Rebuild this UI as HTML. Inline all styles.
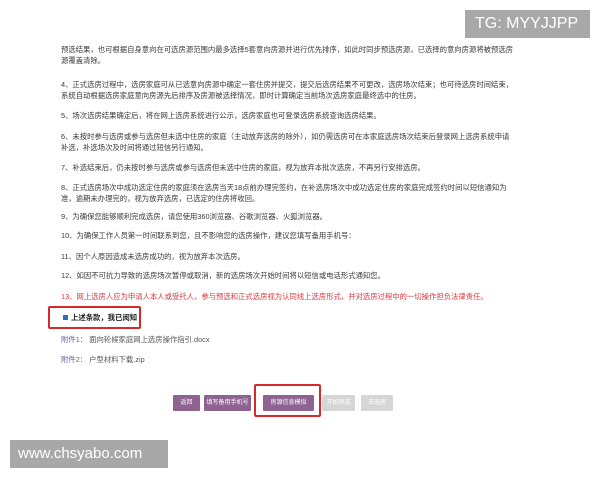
<!DOCTYPE html>
<html><head><meta charset="utf-8"><style>
*{margin:0;padding:0;box-sizing:border-box}
body{width:600px;height:480px;background:#fff;position:relative;overflow:hidden;font-family:"Liberation Sans","Noto Sans CJK SC",sans-serif;color:#3a3a3a;font-size:7px}
.t{position:absolute;left:61px;white-space:nowrap;line-height:11px;font-size:7.35px}
.red{color:#d9393e}
.btn{position:absolute;top:395px;height:16px;color:#fff;font-size:6px;text-align:center;line-height:16px;border-radius:1px}
.p{background:#8e6291}.g{background:#d6d6d6}
.wm{position:absolute;background:#a8a8a8;color:#fff;font-size:16px;line-height:28px;padding-left:10px}
</style></head><body>
<div class="t" style="top:44px">预选结果，也可根据自身意向在可选房源范围内最多选择5套意向房源并进行优先排序，如此时同步预选房源，已选择的意向房源将被预选房<br>源覆盖清除。</div>
<div class="t" style="top:79px">4、正式选房过程中，选房家庭可从已选意向房源中确定一套住房并提交，提交后选房结果不可更改，选房场次结束；也可待选房时间结束，<br>系统自动根据选房家庭意向房源先后排序及房源被选择情况，即时计算确定当前场次选房家庭最终选中的住房。</div>
<div class="t" style="top:110px">5、场次选房结果确定后，将在网上选房系统进行公示，选房家庭也可登录选房系统查询选房结果。</div>
<div class="t" style="top:131px">6、未按时参与选房或参与选房但未选中住房的家庭（主动放弃选房的除外），如仍需选房可在本家庭选房场次结束后登录网上选房系统申请<br>补选，补选场次及时间将通过短信另行通知。</div>
<div class="t" style="top:162px">7、补选结束后，仍未按时参与选房或参与选房但未选中住房的家庭，视为放弃本批次选房，不再另行安排选房。</div>
<div class="t" style="top:182px">8、正式选房场次中成功选定住房的家庭须在选房当天18点前办理完签约，在补选房场次中成功选定住房的家庭完成签约时间以短信通知为<br>准，逾期未办理完的，视为放弃选房，已选定的住房将收回。</div>
<div class="t" style="top:211px">9、为确保您能够顺利完成选房，请您使用360浏览器、谷歌浏览器、火狐浏览器。</div>
<div class="t" style="top:230px">10、为确保工作人员第一时间联系到您，且不影响您的选房操作，建议您填写备用手机号：</div>
<div class="t" style="top:251px">11、因个人原因造成未选房成功的，视为放弃本次选房。</div>
<div class="t" style="top:270px">12、如因不可抗力导致的选房场次暂停或取消，新的选房场次开始时间将以短信或电话形式通知您。</div>
<div class="t red" style="top:291px">13、网上选房人应为申请人本人或受托人，参与预选和正式选房视为认同线上选房形式，并对选房过程中的一切操作担负法律责任。</div>
<div style="position:absolute;left:48px;top:306px;width:93px;height:23px;border:2px solid #d42a2a;border-radius:2px"></div>
<div style="position:absolute;left:63px;top:315px;width:5px;height:5px;background:#2f6fb8"></div>
<div class="t" style="top:312px;left:71px;font-weight:bold;color:#222">上述条款，我已阅知</div>
<div class="t" style="top:334px;color:#555"><span style="color:#5a5aa0">附件1：</span> 面向轮候家庭网上选房操作指引.docx</div>
<div class="t" style="top:354px;color:#555"><span style="color:#5a5aa0">附件2：</span> 户型材料下载.zip</div>
<div class="btn p" style="left:173px;width:27px">返回</div>
<div class="btn p" style="left:204px;width:47px">填写备用手机号</div>
<div class="btn p" style="left:263px;width:51px">房源信息模拟</div>
<div class="btn g" style="left:322px;width:33px">开始预选</div>
<div class="btn g" style="left:361px;width:32px">去选房</div>
<div style="position:absolute;left:254px;top:384px;width:67px;height:33px;border:2px solid #d42a2a;border-radius:2px"></div>
<div class="wm" style="left:465px;top:10px;width:125px">TG: MYYJJPP</div>
<div class="wm" style="left:10px;top:440px;width:158px;padding-left:8px;font-size:15px">www.chsyabo.com</div>
</body></html>
